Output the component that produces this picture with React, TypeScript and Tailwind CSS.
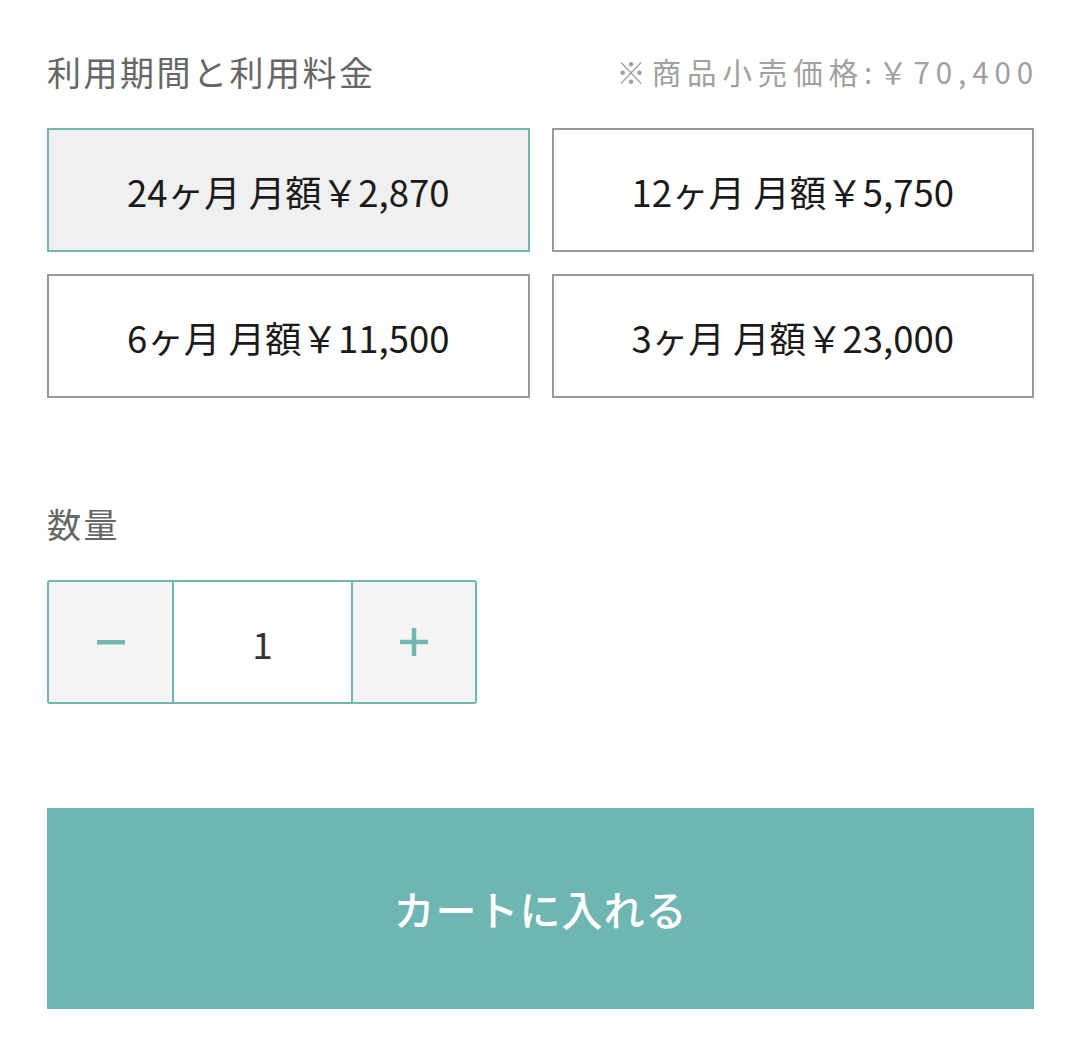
import React from "react";

const options = [
  { label: "24ヶ月 月額￥2,870", selected: true },
  { label: "12ヶ月 月額￥5,750", selected: false },
  { label: "6ヶ月 月額￥11,500", selected: false },
  { label: "3ヶ月 月額￥23,000", selected: false },
];

export default function App() {
  return (
    <div
      className="w-[1080px] min-h-[1044px] bg-white pl-[47px] pr-[46px] pt-[44px] flex flex-col"
      style={{ fontFamily: '"Noto Sans CJK JP", "Noto Sans", sans-serif' }}
    >
      <div className="h-[56px] flex items-center justify-between">
        <h2 className="text-[34px] tracking-[2.5px] text-[#666666] font-normal leading-none">
          利用期間と利用料金
        </h2>
        <p className="text-[29.5px] tracking-[0.2em] text-[#a0a0a0] leading-none mr-[-5px]">
          ※商品小売価格:￥70,400
        </p>
      </div>

      <div className="mt-[28px] grid grid-cols-2 gap-x-[22px] gap-y-[22px]">
        {options.map((o) => (
          <button
            key={o.label}
            className={
              o.selected
                ? "h-[124px] pt-[4px] border-2 border-[#70b6b2] bg-[#f0f0f0] flex items-center justify-center text-[36.5px] text-[#1a1a1a]"
                : "h-[124px] pt-[4px] border-2 border-[#9a9a9a] bg-white flex items-center justify-center text-[36.5px] text-[#1a1a1a]"
            }
          >
            {o.label}
          </button>
        ))}
      </div>

      <div className="mt-[98px] h-[56px] flex items-center">
        <h2 className="text-[34px] tracking-[2.5px] text-[#666666] font-normal leading-none">数量</h2>
      </div>

      <div className="mt-[28px] w-[430px] h-[124px] border-2 border-[#70b6b2] rounded-[3px] flex overflow-hidden">
        <div className="w-[123px] h-full bg-[#f4f4f4] flex items-center justify-center">
          <svg width="28" height="6" viewBox="0 0 28 6">
            <rect x="0" y="1" width="28" height="4.5" fill="#70b6b2" />
          </svg>
        </div>
        <div className="w-[181px] h-full pt-[4px] bg-white border-l-2 border-r-2 border-[#70b6b2] flex items-center justify-center text-[37px] text-[#333333]">
          1
        </div>
        <div className="flex-1 h-full bg-[#f4f4f4] flex items-center justify-center">
          <svg width="28" height="28" viewBox="0 0 28 28">
            <rect x="0" y="11.75" width="28" height="4.5" fill="#70b6b2" />
            <rect x="11.75" y="0" width="4.5" height="28" fill="#70b6b2" />
          </svg>
        </div>
      </div>

      <button className="mt-[104px] h-[201px] w-full bg-[#6fb6b2] flex items-center justify-center text-white text-[41px] font-medium tracking-[1px]">
        カートに入れる
      </button>
    </div>
  );
}
